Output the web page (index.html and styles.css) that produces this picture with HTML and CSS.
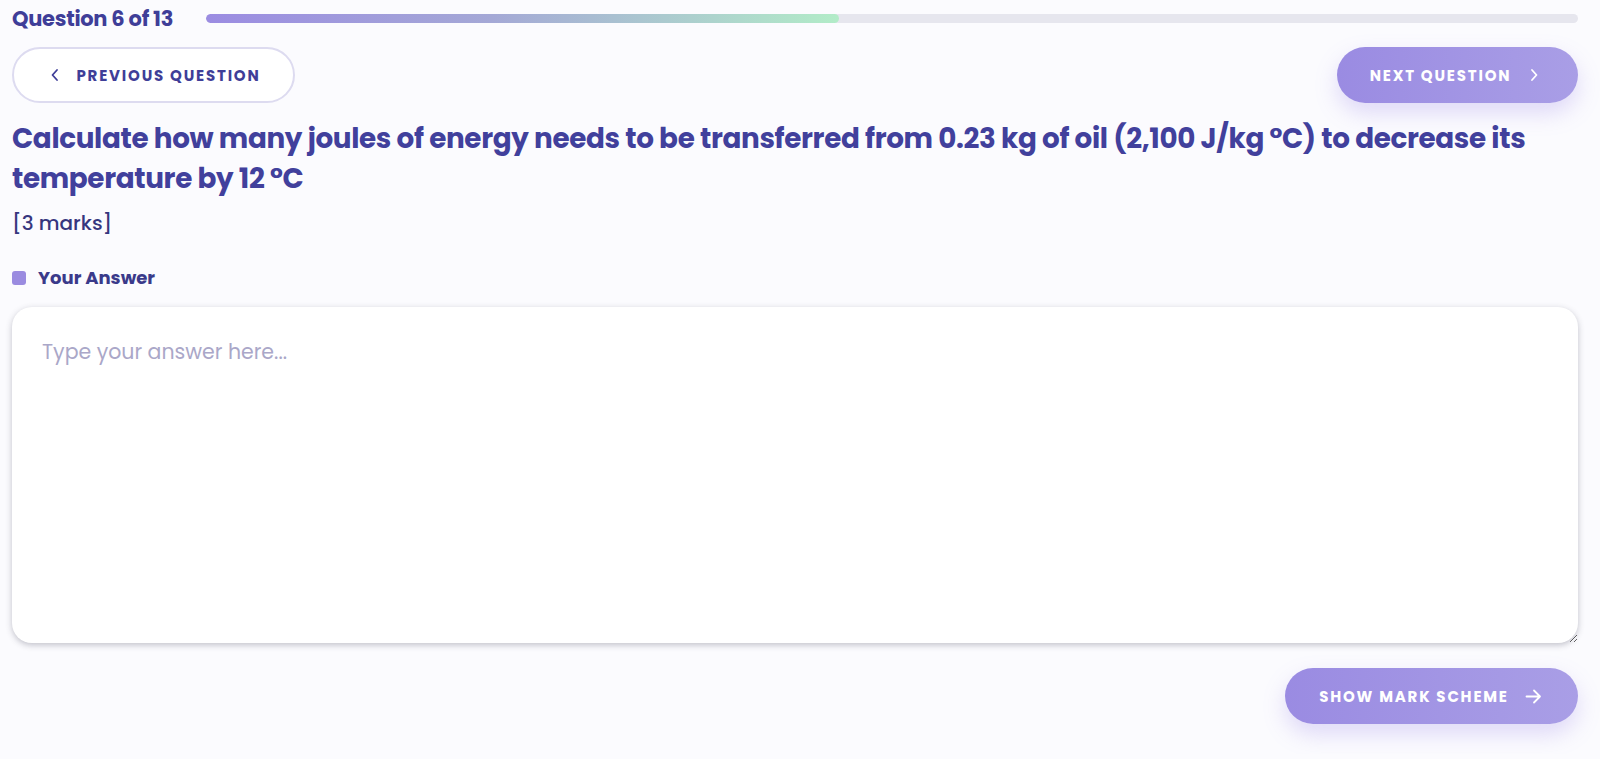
FILE: index.html
```html
<!DOCTYPE html>
<html>
<head>
<meta charset="utf-8">
<link rel="stylesheet" href="styles.css">
</head>
<body>
<div class="page">
  <div class="progress-row">
    <div class="progress-label">Question 6 of 13</div>
    <div class="progress-track"><div class="progress-fill" style="width:46.15%"></div></div>
  </div>
  <div class="nav-row">
    <button class="btn btn-outline">
      <svg class="chev" width="10" height="14" viewBox="0 0 10 14"><path d="M7 2 L2.5 7 L7 12" fill="none" stroke="currentColor" stroke-width="1.8" stroke-linecap="round" stroke-linejoin="round"/></svg>
      <span>PREVIOUS QUESTION</span>
    </button>
    <button class="btn btn-primary btn-next">
      <span>NEXT QUESTION</span>
      <svg class="chev" width="10" height="14" viewBox="0 0 10 14"><path d="M3 2 L7.5 7 L3 12" fill="none" stroke="currentColor" stroke-width="1.8" stroke-linecap="round" stroke-linejoin="round"/></svg>
    </button>
  </div>
  <h1 class="question">Calculate how many joules of energy needs to be transferred from 0.23 kg of oil (2,100 J/kg °C) to decrease its temperature by 12 °C</h1>
  <div class="marks">[3 marks]</div>
  <div class="answer-label"><span class="dot"></span>Your Answer</div>
  <textarea class="answer" placeholder="Type your answer here..."></textarea>
  <div class="footer-row">
    <button class="btn btn-primary btn-scheme">
      <span>SHOW MARK SCHEME</span>
      <svg width="17" height="15" viewBox="0 0 17 15"><path d="M1.5 7.5 H15 M9 1.5 L15 7.5 L9 13.5" fill="none" stroke="currentColor" stroke-width="1.8" stroke-linecap="round" stroke-linejoin="round"/></svg>
    </button>
  </div>
</div>
</body>
</html>
```
FILE: styles.css
```css
html, body {
  margin: 0;
  padding: 0;
  background: #fbfbfe;
}
body {
  font-family: "Poppins", "Open Sans", "DejaVu Sans", sans-serif;
  color: #3f3e98;
}
.page {
  padding: 4px 22px 30px 12px;
  display: flex;
  flex-direction: column;
}
.progress-row {
  display: flex;
  align-items: center;
  gap: 33px;
  height: 29px;
}
.progress-label {
  font-weight: 700;
  font-size: 21px;
  white-space: nowrap;
  letter-spacing: -0.3px;
}
.progress-track {
  flex: 1;
  height: 9px;
  border-radius: 5px;
  background: #e6e6ee;
  overflow: hidden;
}
.progress-fill {
  height: 100%;
  border-radius: 5px;
  background: linear-gradient(90deg, #9b8ce2 0%, #a4a8d6 45%, #b2ecc8 100%);
}
.nav-row {
  display: flex;
  justify-content: space-between;
  margin-top: 14px;
}
.btn {
  display: inline-flex;
  align-items: center;
  justify-content: center;
  height: 56px;
  border-radius: 28px;
  font-family: inherit;
  font-weight: 700;
  font-size: 15px;
  letter-spacing: 1.8px;
  cursor: pointer;
  box-sizing: border-box;
}
.btn-outline {
  width: 283px;
  background: #ffffff;
  border: 2px solid #dddbf0;
  color: #3f3e98;
  gap: 16px;
  padding: 0 0 0 4px;
}
.btn-primary {
  border: none;
  color: #ffffff;
  background: linear-gradient(90deg, #9a8be2 0%, #a99ee6 100%);
  box-shadow: 0 10px 22px rgba(150, 130, 230, 0.28);
}
.btn-next {
  width: 241px;
  gap: 18px;
  padding: 0 6px 0 0;
}
.question {
  margin: 16px 0 0 0;
  font-size: 27.8px;
  line-height: 40px;
  font-weight: 700;
  letter-spacing: -0.34px;
  color: #41409c;
}
.marks {
  margin-top: 10px;
  font-size: 20px;
  font-weight: 500;
  color: #36367e;
  line-height: 28px;
}
.answer-label {
  margin-top: 30px;
  display: flex;
  align-items: center;
  gap: 12px;
  font-size: 18px;
  font-weight: 700;
  color: #3a3a8a;
  line-height: 22px;
}
.dot {
  width: 14px;
  height: 14px;
  border-radius: 3px;
  background: #9a8be0;
}
.answer {
  margin-top: 18px;
  height: 336px;
  box-sizing: border-box;
  width: 100%;
  border: none;
  border-radius: 20px;
  background: #ffffff;
  box-shadow: 0 2px 6px rgba(60, 60, 80, 0.3);
  padding: 30px 30px;
  font-family: inherit;
  font-size: 20.5px;
  line-height: 30px;
  color: #3f3e98;
  outline: none;
}
.answer::placeholder {
  color: #aaa7c8;
}
.footer-row {
  display: flex;
  justify-content: flex-end;
  margin-top: 25px;
}
.btn-scheme {
  width: 293px;
  gap: 16px;
  padding: 0 2px 0 0;
}
```
